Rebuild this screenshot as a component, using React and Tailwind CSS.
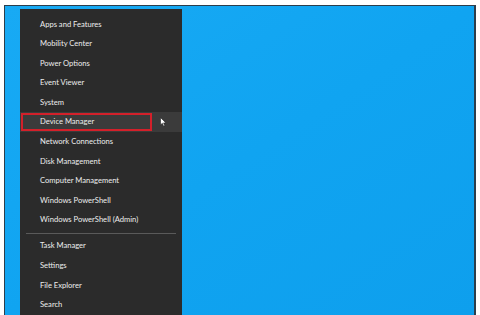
const topItems = [
  "Apps and Features",
  "Mobility Center",
  "Power Options",
  "Event Viewer",
  "System",
  "Device Manager",
  "Network Connections",
  "Disk Management",
  "Computer Management",
  "Windows PowerShell",
  "Windows PowerShell (Admin)",
];

const bottomItems = ["Task Manager", "Settings", "File Explorer", "Search"];

function MenuRow({ label, active }) {
  return (
    <div
      className={`relative flex h-[19.6px] shrink-0 items-center pl-[20px] ${
        active ? "bg-[#3b3b3b]" : ""
      }`}
    >
      {active && (
        <div className="absolute left-[1px] top-[1px] h-[18px] w-[131px] border-2 border-[#d4202a]" />
      )}
      <span className="relative text-[7.6px] leading-none text-[#ededed]">{label}</span>
      {active && (
        <svg
          className="absolute left-[140px] top-[5px]"
          width="7"
          height="10"
          viewBox="0 0 7 10"
        >
          <path d="M0.5 0.5 L0.5 8 L2.3 6.3 L3.6 9.3 L4.8 8.8 L3.6 5.9 L6 5.9 Z" fill="#fff" stroke="#222" strokeWidth="0.6" />
        </svg>
      )}
    </div>
  );
}

export default function App() {
  return (
    <div
      className="flex h-[315px] w-[480px] flex-col overflow-hidden bg-white pl-[4px] pr-[4px] pt-[5px]"
      style={{ fontFamily: 'Lato, "Liberation Sans", sans-serif' }}
    >
      <div className="flex min-h-0 flex-1 border-l border-r-2 border-t border-[#2c3e4c] bg-gradient-to-br from-[#18aaf4] via-[#10a4f1] to-[#0e9fed] pl-[15px] pt-[3px]">
        <div className="flex w-[162px] flex-col overflow-hidden bg-[#2b2b2b] pt-[5.5px]">
          {topItems.map((item) => (
            <MenuRow key={item} label={item} active={item === "Device Manager"} />
          ))}
          <div className="flex h-[6.4px] shrink-0 items-center px-[6px]">
            <div className="h-px w-full bg-[#5a5a5a]" />
          </div>
          {bottomItems.map((item) => (
            <MenuRow key={item} label={item} />
          ))}
        </div>
      </div>
    </div>
  );
}
